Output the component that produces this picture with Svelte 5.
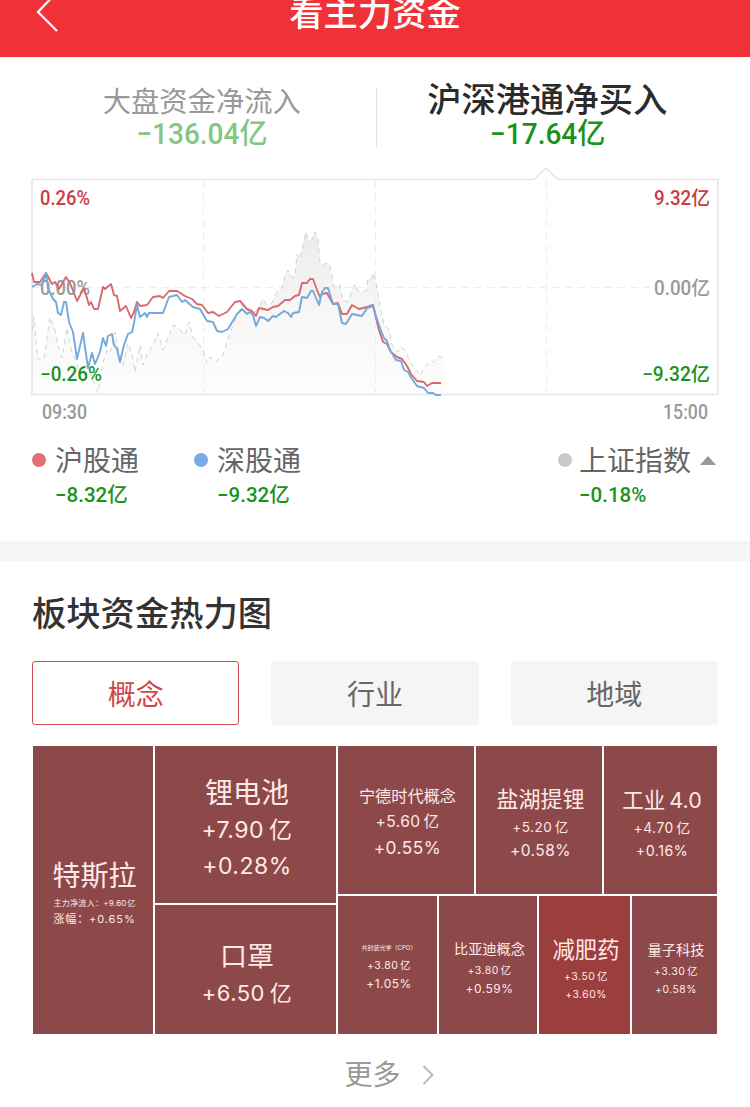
<script lang="ts">
	type Line = { text: string; size: number; height: number; spacing?: number };
	type Tile = { top: number; basis: number; hot?: boolean; lines: Line[] };

	const line = (text: string, size: number, height: number, spacing = 0.5): Line => ({
		text,
		size,
		height,
		spacing
	});

	const tesla: Tile = {
		top: 111,
		basis: 288,
		lines: [
			line('特斯拉', 28, 38, 0),
			line('主力净流入：+9.60 亿', 8.1, 16, 0.2),
			line('涨幅：+0.65%', 11, 17, 0.9)
		]
	};

	const middle: Tile[] = [
		{
			top: 28,
			basis: 157,
			lines: [line('锂电池', 28, 38, 0), line('+7.90 亿', 23, 37), line('+0.28%', 23, 34)]
		},
		{ top: 33, basis: 129, lines: [line('口罩', 27, 38, 0), line('+6.50 亿', 22, 34)] }
	];

	const rows: { basis: number; tiles: Tile[] }[] = [
		{
			basis: 148,
			tiles: [
				{
					top: 37,
					basis: 136,
					lines: [line('宁德时代概念', 16.2, 26, 0), line('+5.60 亿', 15.5, 25), line('+0.55%', 17.3, 28)]
				},
				{
					top: 37,
					basis: 126,
					lines: [line('盐湖提锂', 22, 32, 0), line('+5.20 亿', 13.5, 24), line('+0.58%', 15.5, 23)]
				},
				{
					top: 38,
					basis: 113,
					lines: [line('工业 4.0', 21.5, 32, 0), line('+4.70 亿', 13.8, 24), line('+0.16%', 14.2, 22)]
				}
			]
		},
		{
			basis: 138,
			tiles: [
				{
					top: 43,
					basis: 99,
					lines: [line('共封装光学（CPO）', 6, 18, 0), line('+3.80 亿', 10.5, 17), line('+1.05%', 12, 19)]
				},
				{
					top: 41,
					basis: 98,
					lines: [line('比亚迪概念', 14.2, 24, 0), line('+3.80 亿', 10.5, 19), line('+0.59%', 12, 17)]
				},
				{
					top: 38,
					basis: 91,
					hot: true,
					lines: [line('减肥药', 22.3, 32, 0), line('+3.50 亿', 10.5, 21), line('+3.60%', 10.3, 15)]
				},
				{
					top: 42,
					basis: 85,
					lines: [line('量子科技', 14.2, 24, 0), line('+3.30 亿', 10.5, 19), line('+0.58%', 10.3, 17)]
				}
			]
		}
	];

	const tabs = ['概念', '行业', '地域'];
	let active = $state('概念');

	const shanghai =
		'32,273 34,282 40,282 46,273 52,284 55,282 59,289 66,277 70,283 77,301 84,288 89,305 91,302 94,309 98,309 103,287 105,289 111,284 114,295 117,296 120,311 126,306 131,318 134,312 137,302 140,306 147,305 153,297 160,296 163,298 169,291 177,291 185,296 192,299 197,304 202,305 208,313 213,312 219,316 227,312 235,302 240,301 247,309 252,311 256,316 259,308 268,310 273,307 278,306 285,300 290,300 295,296 299,295 302,283 307,283 310,279 313,279 317,290 320,297 322,294 327,293 333,304 338,303 342,314 347,314 352,305 359,309 367,307 373,305 376,318 379,330 383,342 387,344 391,352 397,357 402,359 407,366 411,374 417,381 424,382 427,386 432,383 441,383';
	const shenzhen =
		'32,287 37,284 42,285 46,273 48,288 53,299 56,302 58,313 61,315 64,302 66,302 69,322 73,332 77,359 83,333 88,368 92,353 95,364 100,352 103,338 106,346 108,336 112,334 114,345 117,349 120,362 124,345 128,334 132,332 134,323 137,305 140,317 145,313 147,317 149,313 163,313 169,297 177,295 182,302 185,300 193,307 200,309 207,321 213,322 217,331 222,332 228,329 237,314 242,309 247,314 250,312 253,315 256,326 260,317 264,318 268,321 273,316 276,317 284,311 288,313 291,317 293,313 299,312 302,297 307,298 311,291 313,291 319,305 322,292 325,288 328,288 333,304 338,304 342,323 346,324 352,314 362,316 367,308 373,306 376,316 380,328 384,338 387,341 390,350 396,360 401,361 404,370 408,372 412,379 417,386 424,388 428,393 433,393 436,395 441,395';
	const index =
		'32,330 34,317 37,352 39,360 44,360 50,317 55,330 58,345 62,358 67,328 72,352 77,365 82,383 87,365 92,378 98,393 103,362 107,350 110,353 115,332 119,352 123,365 128,343 132,355 135,372 140,345 143,365 148,352 153,345 158,333 163,350 168,338 173,325 178,328 185,335 189,322 193,337 198,343 203,350 207,363 210,357 215,362 222,357 230,333 237,315 243,304 248,311 255,312 260,306 263,299 267,305 272,303 277,292 282,288 285,275 288,270 293,278 295,275 297,254 300,259 304,240 306,232 308,240 312,240 315,232 318,240 320,262 323,265 326,263 330,265 334,287 340,285 343,300 348,302 352,290 355,284 358,291 366,291 368,279 371,280 373,273 376,283 380,305 384,325 389,329 392,345 398,352 401,347 405,350 410,362 416,370 420,376 424,368 430,362 434,362 438,356 443,358';
</script>

{#snippet tileBox(tile: Tile)}
	<div class="tile" class:hot={tile.hot} style="flex-basis: {tile.basis}px; padding-top: {tile.top}px">
		{#each tile.lines as l}
			<span style="font-size: {l.size}px; line-height: {l.height}px; letter-spacing: {l.spacing}px">{l.text}</span>
		{/each}
	</div>
{/snippet}

<div class="page">
	<header>
		<svg class="back" width="24" height="36" viewBox="0 0 24 36">
			<path d="M19 -6 L2 12 L21 31" />
		</svg>
		<h1>看主力资金</h1>
	</header>

	<section class="flows">
		<div class="summary">
			<div class="total">
				<span class="name">大盘资金净流入</span>
				<span class="amount">−136.04亿</span>
			</div>
			<div class="total selected">
				<span class="name">沪深港通净买入</span>
				<span class="amount">−17.64亿</span>
			</div>
		</div>

		<svg class="chart" width="750" height="270" viewBox="0 160 750 270">
			<defs>
				<linearGradient id="shade" gradientUnits="userSpaceOnUse" x1="0" y1="232" x2="0" y2="395">
					<stop offset="0" stop-color="#ebebeb" />
					<stop offset="0.5" stop-color="#f7f7f7" />
					<stop offset="1" stop-color="#fdfdfd" />
				</linearGradient>
			</defs>
			<polygon points="32,395 {index} 443,395" fill="url(#shade)" />
			<g class="grid">
				<path d="M32 287.5H650M203.5 180V395M375.5 180V395M546.5 180V395" />
			</g>
			<path class="frame" d="M32 179.5H534L546 168L558 179.5H718V394.5H32Z" />
			<polyline class="index" points={index} />
			<g class="axis">
				<text class="up" x="40" y="205" textLength="50" lengthAdjust="spacingAndGlyphs">0.26%</text>
				<text x="40" y="295" textLength="50" lengthAdjust="spacingAndGlyphs">0.00%</text>
				<text class="down" x="40" y="381" textLength="62" lengthAdjust="spacingAndGlyphs">−0.26%</text>
				<text class="up" x="654" y="205" textLength="56" lengthAdjust="spacingAndGlyphs">9.32亿</text>
				<text x="654" y="295" textLength="56" lengthAdjust="spacingAndGlyphs">0.00亿</text>
				<text class="down" x="642" y="381" textLength="68" lengthAdjust="spacingAndGlyphs">−9.32亿</text>
				<text x="42" y="419" textLength="45" lengthAdjust="spacingAndGlyphs">09:30</text>
				<text x="663" y="419" textLength="45" lengthAdjust="spacingAndGlyphs">15:00</text>
			</g>
			<polyline class="line red" points={shanghai} />
			<polyline class="line blue" points={shenzhen} />
		</svg>

		<div class="legend">
			<div class="item">
				<i style="background: #e36f74"></i>
				<span>沪股通</span>
				<b>−8.32亿</b>
			</div>
			<div class="item">
				<i style="background: #79abe8"></i>
				<span>深股通</span>
				<b>−9.32亿</b>
			</div>
			<div class="item last">
				<i style="background: #c9c9c9"></i>
				<span>上证指数<svg width="16" height="9" viewBox="0 0 16 9"><path d="M0 9L8 0L16 9Z" fill="#999" /></svg></span>
				<b>−0.18%</b>
			</div>
		</div>
	</section>

	<section class="heat">
		<h2>板块资金热力图</h2>
		<div class="tabs">
			{#each tabs as tab}
				<button class:active={tab === active} onclick={() => (active = tab)}>{tab}</button>
			{/each}
		</div>
		<div class="treemap">
			<div class="column first">{@render tileBox(tesla)}</div>
			<div class="column second">
				{#each middle as tile}
					{@render tileBox(tile)}
				{/each}
			</div>
			<div class="column third">
				{#each rows as row}
					<div class="row" style="flex-basis: {row.basis}px">
						{#each row.tiles as tile}
							{@render tileBox(tile)}
						{/each}
					</div>
				{/each}
			</div>
		</div>
		<div class="more">
			<span>更多</span>
			<svg width="12" height="22" viewBox="0 0 12 22"><path d="M1.5 2L10.5 11L1.5 20" /></svg>
		</div>
	</section>
</div>

<style>
	:global(body) {
		margin: 0;
		background: #fff;
	}

	.page {
		width: 750px;
		height: 1107px;
		overflow: hidden;
		font-family: Roboto, 'Noto Sans CJK SC', sans-serif;
		color: #333;
	}

	header {
		position: relative;
		height: 57px;
		background: #f03238;
		overflow: hidden;
	}

	.back {
		position: absolute;
		left: 36px;
		top: 0;
		fill: none;
		stroke: #fff;
		stroke-width: 2.2;
	}

	h1 {
		margin: -11px 0 0;
		font-size: 34.3px;
		line-height: 50px;
		font-weight: 500;
		text-align: center;
		color: #fff;
	}

	.flows {
		height: 484px;
		border-bottom: 20px solid #f5f5f5;
	}

	.summary {
		display: flex;
		height: 103px;
	}

	.total {
		flex: 1;
		display: flex;
		flex-direction: column;
		align-items: center;
		padding-top: 28px;
		padding-left: 29px;
	}

	.total .name {
		font-size: 28.3px;
		line-height: 36px;
		color: #999;
	}

	.total .amount {
		font-size: 29px;
		line-height: 27px;
		font-weight: 500;
		color: #84c684;
		transform: scaleX(0.965);
	}

	.total.selected {
		position: relative;
		padding-top: 22px;
		padding-left: 0;
		padding-right: 30px;
	}

	.total.selected::before {
		content: '';
		position: absolute;
		left: 1px;
		top: 30px;
		width: 1px;
		height: 60px;
		background: #e2e2e2;
	}

	.selected .name {
		font-size: 34.3px;
		line-height: 42px;
		font-weight: 500;
		color: #2b2b2b;
	}

	.selected .amount {
		color: #199319;
	}

	.chart {
		display: block;
	}

	.grid {
		fill: none;
		stroke: #eeeeee;
		stroke-width: 1.2;
		stroke-dasharray: 8 5;
	}

	.frame {
		fill: none;
		stroke: #e6e6e6;
		stroke-width: 1.7;
	}

	.index {
		fill: none;
		stroke: #d2d2d2;
		stroke-width: 1;
		stroke-dasharray: 5 4;
	}

	.line {
		fill: none;
		stroke-width: 1.9;
		stroke-linejoin: round;
	}

	.red {
		stroke: #d8696d;
	}

	.blue {
		stroke: #73a9dc;
	}

	.axis {
		font-size: 19.5px;
		fill: #999;
		font-weight: 500;
	}

	.up {
		fill: #cc3c3f;
	}

	.down {
		fill: #199319;
	}

	.legend {
		display: flex;
		height: 54px;
		padding: 11px 0 0 32px;
	}

	.item {
		display: grid;
		grid-template-columns: 14px auto;
		grid-template-rows: 39px 30px;
		column-gap: 9px;
		width: 162px;
		align-items: center;
	}

	.item.last {
		margin-left: 202px;
		column-gap: 7px;
	}

	.item i {
		width: 14px;
		height: 14px;
		margin-top: -1px;
		border-radius: 50%;
	}

	.item span {
		padding-top: 1px;
		font-size: 28px;
		line-height: 39px;
		color: #666;
		white-space: nowrap;
	}

	.item span svg {
		margin-left: 9px;
		vertical-align: 6px;
	}

	.item b {
		grid-column: 2;
		font-size: 20.5px;
		line-height: 30px;
		font-weight: 500;
		color: #199319;
		transform: scaleX(1);
		transform-origin: left;
	}

	h2 {
		margin: 0;
		padding: 28px 0 0 32px;
		font-size: 34.3px;
		line-height: 50px;
		font-weight: 500;
		color: #333;
	}

	.tabs {
		display: grid;
		grid-template-columns: repeat(3, 1fr);
		gap: 32px;
		padding: 22px 32px 0;
	}

	.tabs button {
		box-sizing: border-box;
		height: 64px;
		padding: 0;
		border: 0;
		border-radius: 3px;
		background: #f5f5f5;
		font: 28px/64px 'Noto Sans CJK SC', sans-serif;
		color: #666;
	}

	.tabs .active {
		border: 1.5px solid #cf4d50;
		line-height: 62px;
		background: #fff;
		color: #d0474b;
	}

	.treemap {
		display: flex;
		gap: 2px;
		height: 288px;
		margin: 21px 33px 0;
		font-family: Inter, 'Noto Sans CJK SC', sans-serif;
		word-spacing: -0.12em;
	}

	.column {
		display: flex;
		flex-direction: column;
		gap: 2px;
	}

	.first {
		width: 120px;
	}

	.second {
		width: 181px;
	}

	.third {
		width: 379px;
	}

	.row {
		display: flex;
		gap: 2px;
	}

	.tile {
		box-sizing: border-box;
		display: flex;
		flex-direction: column;
		min-width: 0;
		padding-left: 3px;
		align-items: center;
		background: #8d494a;
		color: #ffe9e6;
		white-space: nowrap;
	}

	.tile.hot {
		background: #9c3e3d;
	}

	.more {
		display: flex;
		align-items: center;
		justify-content: center;
		gap: 21px;
		margin-top: 22px;
		padding-left: 28px;
		height: 40px;
		font-size: 28px;
		line-height: 40px;
		color: #999;
	}

	.more svg {
		margin-top: -2px;
		fill: none;
		stroke: #bbb;
		stroke-width: 2;
	}
</style>
